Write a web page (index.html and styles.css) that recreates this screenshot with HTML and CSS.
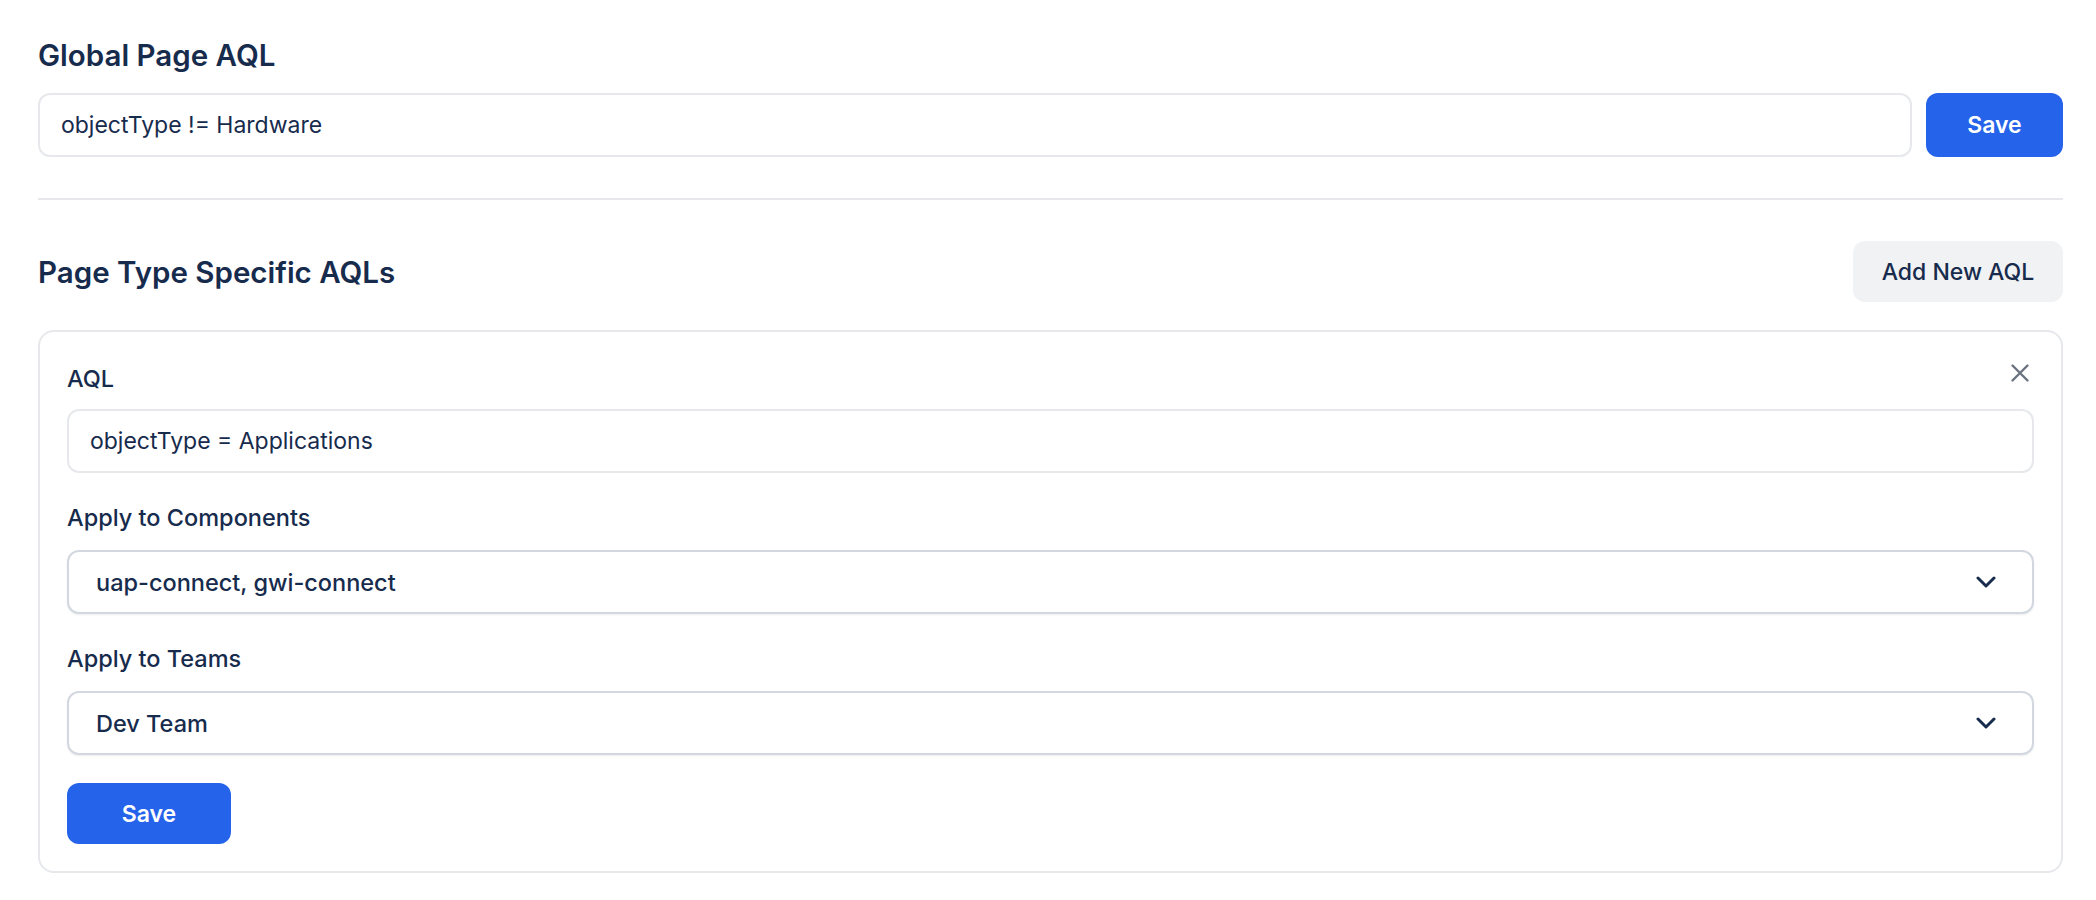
FILE: index.html
```html
<!DOCTYPE html>
<html lang="en">
<head>
<meta charset="utf-8">
<title>AQL Settings</title>
<link rel="stylesheet" href="styles.css">
</head>
<body>
<main class="page">
  <h2 class="heading">Global Page AQL</h2>
  <div class="global-row">
    <input class="text-input grow" type="text" value="objectType != Hardware">
    <button class="btn btn-primary btn-top">Save</button>
  </div>
  <hr class="divider">
  <div class="section-head">
    <h2 class="heading">Page Type Specific AQLs</h2>
    <button class="btn btn-secondary">Add New AQL</button>
  </div>
  <section class="card">
    <div class="card-head">
      <label class="label first">AQL</label>
      <button class="close" aria-label="Remove">
        <svg viewBox="0 0 32 32" width="32" height="32"><path d="M8.5 8.5 L23.5 23.5 M23.5 8.5 L8.5 23.5" stroke="#6b7280" stroke-width="2.4" stroke-linecap="round" fill="none"/></svg>
      </button>
    </div>
    <input class="text-input card-input" type="text" value="objectType = Applications">
    <label class="label">Apply to Components</label>
    <div class="select">
      <span>uap-connect, gwi-connect</span>
      <svg class="chev" viewBox="0 0 20 12" width="20" height="12"><path d="M2 2 L10 10 L18 2" stroke="#172b4d" stroke-width="3" fill="none" stroke-linecap="round" stroke-linejoin="round"/></svg>
    </div>
    <label class="label">Apply to Teams</label>
    <div class="select">
      <span>Dev Team</span>
      <svg class="chev" viewBox="0 0 20 12" width="20" height="12"><path d="M2 2 L10 10 L18 2" stroke="#172b4d" stroke-width="3" fill="none" stroke-linecap="round" stroke-linejoin="round"/></svg>
    </div>
    <button class="btn btn-primary btn-card">Save</button>
  </section>
</main>
</body>
</html>
```

FILE: styles.css
```css
* { box-sizing: border-box; }
html, body { margin: 0; padding: 0; background: #ffffff; }
body {
  font-family: Inter, "Noto Sans", "Liberation Sans", sans-serif;
  color: #172b4d;
}
.page {
  padding: 37px 33px 0 38px;
  display: flex;
  flex-direction: column;
}
.heading {
  margin: 0;
  font-size: 29.5px;
  line-height: 36px;
  font-weight: 600;
  color: #172b4d;
}
.global-row {
  display: flex;
  gap: 14px;
  margin-top: 20px;
}
.grow { flex: 1; }
.text-input {
  height: 64px;
  border: 2px solid #e6e8eb;
  border-radius: 12px;
  padding: 0 21px;
  font: inherit;
  font-size: 23px;
  color: #172b4d;
  background: #fff;
  outline: none;
}
.btn {
  border: none;
  font: inherit;
  border-radius: 12px;
  cursor: pointer;
}
.btn-primary {
  background: #2563eb;
  color: #fff;
  font-size: 23px;
  font-weight: 600;
}
.btn-top { width: 137px; height: 64px; }
.btn-secondary {
  background: #f1f2f4;
  color: #172b4d;
  font-size: 23px;
  font-weight: 500;
  width: 210px;
  height: 61px;
}
.divider {
  margin: 41px 0 0;
  border: none;
  height: 2px;
  background: #e6e8eb;
}
.section-head {
  margin-top: 41px;
  display: flex;
  justify-content: space-between;
  align-items: center;
}
.card {
  margin-top: 28px;
  border: 2px solid #e6e8eb;
  border-radius: 16px;
  padding: 27px;
  display: flex;
  flex-direction: column;
}
.card-head {
  display: flex;
  justify-content: space-between;
  align-items: flex-start;
}
.label {
  font-size: 23.5px;
  line-height: 28px;
  font-weight: 500;
  color: #172b4d;
  margin-top: 31px;
  margin-bottom: 18px;
}
.label.first { margin-top: 6px; margin-bottom: 16px; }
.close {
  width: 32px;
  height: 32px;
  padding: 0;
  margin: -2px -2px 0 0;
  border: none;
  background: transparent;
  display: flex;
}
.card-input { width: 100%; }
.select {
  height: 64px;
  border: 2px solid #d3d8e0;
  border-radius: 12px;
  box-shadow: 0 1px 2px rgba(15, 23, 42, 0.08);
  padding: 0 36px 0 27px;
  display: flex;
  align-items: center;
  justify-content: space-between;
  font-size: 23.5px;
  font-weight: 500;
  color: #172b4d;
  background: #fff;
}
.chev { display: block; }
.btn-card {
  margin-top: 28px;
  width: 164px;
  height: 61px;
}
```
